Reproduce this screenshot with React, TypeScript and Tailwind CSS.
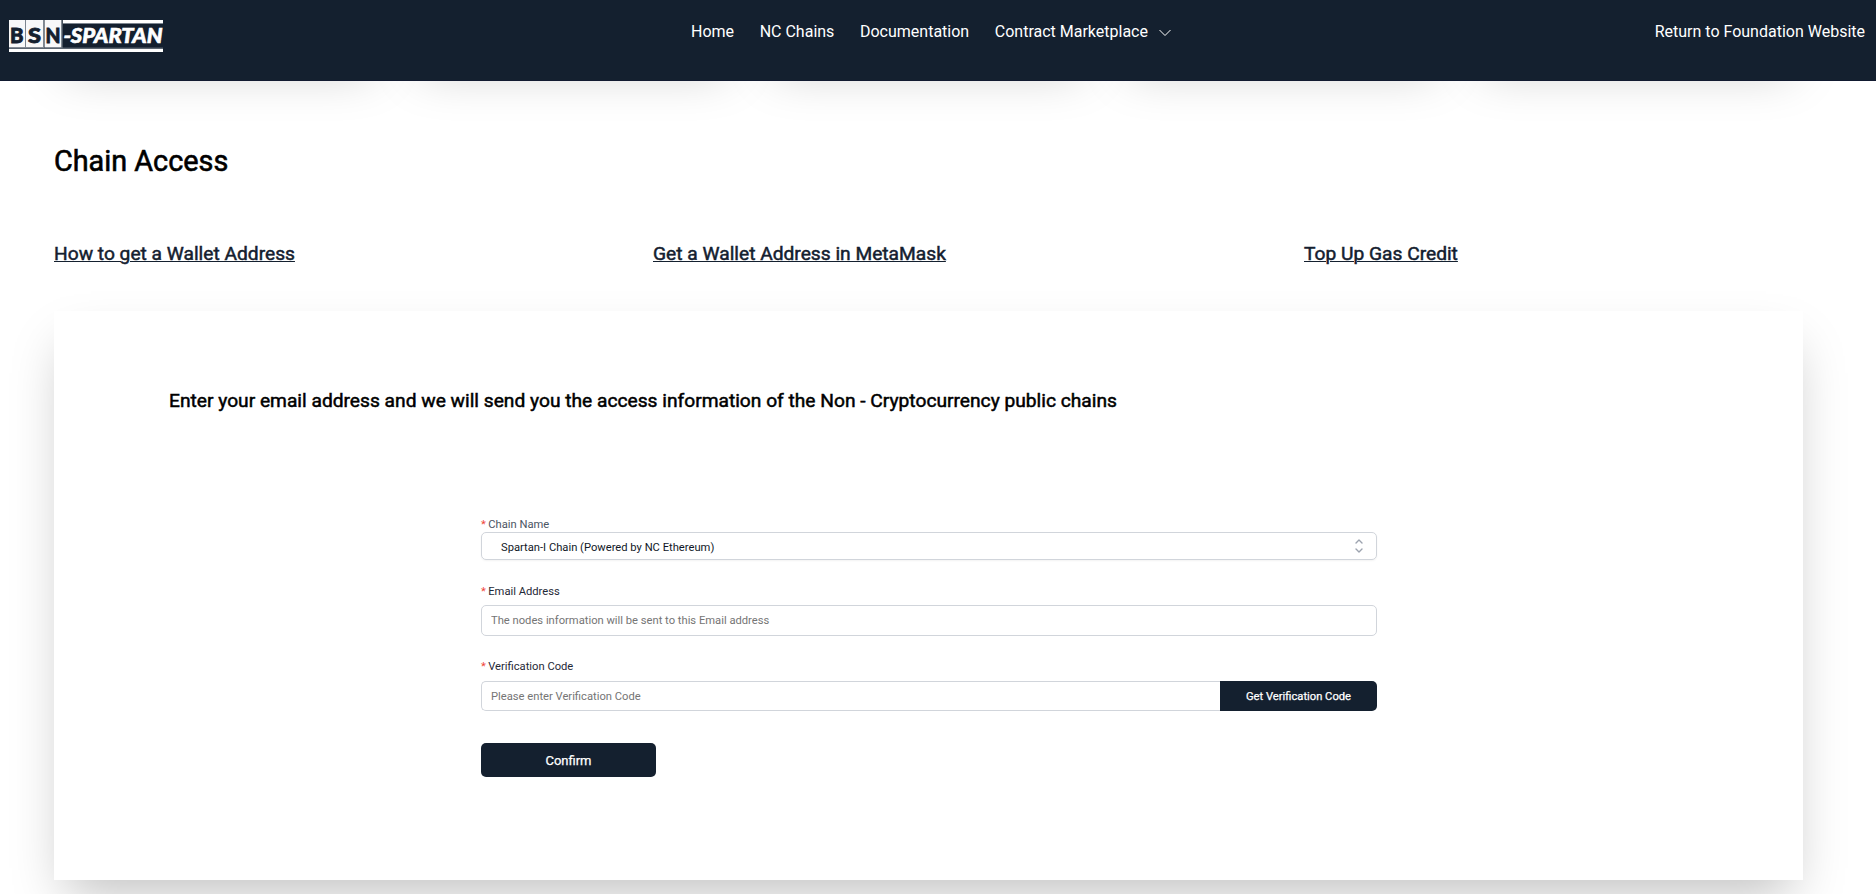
import React from "react";

const navItems = ["Home", "NC Chains", "Documentation"];
const guideLinks = ["How to get a Wallet Address", "Get a Wallet Address in MetaMask", "Top Up Gas Credit"];

function Logo() {
  return (
    <svg width="154" height="32" viewBox="0 0 154 32" fontFamily="Lato, sans-serif" fontWeight="900">
      <rect width="16" height="27.5" fill="#f8f8f9" />
      <rect x="17" width="17" height="27.5" fill="#f8f8f9" />
      <rect x="35.5" width="17" height="27.5" fill="#f8f8f9" />
      <path d="M16.5 0V28M34.5 0V28M53 0V28M54 3.5H154M0 28.2H154" stroke="#7d8690" />
      <rect x="54" width="100" height="3" fill="#fff" />
      <rect y="29" width="154" height="3" fill="#fff" />
      <g fill="#14202f" stroke="#14202f" strokeWidth="0.8" fontSize="20">
        <text x="1" y="22.5" textLength="13.5" lengthAdjust="spacingAndGlyphs">B</text>
        <text x="19" y="22.5" textLength="13" lengthAdjust="spacingAndGlyphs">S</text>
        <text x="36.5" y="22.5" textLength="15" lengthAdjust="spacingAndGlyphs">N</text>
      </g>
      <text x="54.5" y="22.5" fill="#fff" stroke="#fff" strokeWidth="0.6" fontSize="20" fontStyle="italic" textLength="99" lengthAdjust="spacingAndGlyphs">-SPARTAN</text>
    </svg>
  );
}

function Header() {
  return (
    <header className="relative flex h-[81px] items-start border-b border-[#111a30] bg-[#14202f] pr-[11px] pl-[9px] text-[16px] leading-6 text-white">
      <div className="mt-5 w-[682px]">
        <Logo />
      </div>
      <nav className="mt-5 flex flex-1 gap-[25.6px]">
        {navItems.map((item) => (
          <a key={item} href="#">{item}</a>
        ))}
        <a href="#" className="flex items-center">
          Contract Marketplace
          <svg className="mt-px ml-[11.5px]" width="12" height="8" viewBox="0 0 12 8" fill="none" stroke="white">
            <path d="M.5 1l5.5 5.500L11.500 1" />
          </svg>
        </a>
      </nav>
      <a href="#" className="mt-5">Return to Foundation Website</a>
    </header>
  );
}

function Label({ children, className }: { children: string; className: string }) {
  return (
    <label className={`flex gap-[2.4px] text-[11.2px] leading-4 ${className}`}>
      <span className="text-[#f04438]">*</span>
      {children}
    </label>
  );
}

export default function App() {
  return (
    <div className="h-[894px] overflow-hidden bg-white font-['Roboto',sans-serif] text-black">
      <div className="relative z-10">
        <Header />
      </div>
      <div className="-mt-[81px] grid h-14 grid-cols-5 gap-6 pr-[73px] pl-[54px]">
        {[0, 1, 2, 3, 4].map((n) => (
          <div key={n} className="bg-white shadow-2xl" />
        ))}
      </div>
      <main className="relative pt-[87px] pr-[73px] pl-[54px]">
        <h1 className="text-[28.8px] leading-9 font-normal [-webkit-text-stroke:0.6px_currentColor]">Chain Access</h1>
        <div className="mt-[61px] flex h-7 text-[19.2px] leading-7 font-normal text-[#14202f]">
          {guideLinks.map((link, i) => (
            <div key={link} className={i === 0 ? "w-[599px]" : i === 1 ? "w-[651px]" : ""}>
              <a href="#" className="whitespace-nowrap underline decoration-1 underline-offset-1 [-webkit-text-stroke:0.5px_currentColor]">{link}</a>
            </div>
          ))}
        </div>
        <section className="mt-[43px] h-[569px] bg-white pt-[76px] shadow-2xl">
          <h2 className="ml-[115px] text-[19.2px] leading-7 font-normal [-webkit-text-stroke:0.5px_currentColor]">
            Enter your email address and we will send you the access information of the Non - Cryptocurrency public chains
          </h2>
          <form className="mt-[102px] ml-[427px] w-[896px]">
            <Label className="text-[#4b5563]">Chain Name</Label>
            <button type="button" className="-mt-px flex h-7 w-full items-center justify-between rounded-[5px] border border-[#d1d5db] pr-[13px] pl-[19px] text-[11.2px] text-[#111827] shadow-xs">
              <span className="pt-[4px]">Spartan-I Chain (Powered by NC Ethereum)</span>
              <svg width="8" height="14" viewBox="0 0 8 14" fill="none" stroke="#9ca3af" strokeWidth="1.4" strokeLinecap="round" strokeLinejoin="round">
                <path d="M1 4l3-3 3 3M1 10l3 3 3-3" />
              </svg>
            </button>
            <Label className="mt-6 text-[#1f2937]">Email Address</Label>
            <input className="mt-[5px] block h-[31px] w-full rounded-[5px] border border-[#d1d5db] px-[9px] text-[11.2px] placeholder:text-[#757575]" placeholder="The nodes information will be sent to this Email address" />
            <Label className="mt-[23px] text-[#1f2937]">Verification Code</Label>
            <div className="mt-[6px] flex h-[30px]">
              <input className="block flex-1 rounded-l-[5px] border border-r-0 border-[#d1d5db] px-[9px] pt-[3px] text-[11.2px] placeholder:text-[#757575]" placeholder="Please enter Verification Code" />
              <button type="button" className="w-[157px] rounded-r-[5px] bg-[#14202f] pt-[3px] text-[11.2px] text-white [-webkit-text-stroke:0.25px_currentColor]">Get Verification Code</button>
            </div>
            <button type="button" className="mt-8 block h-[34px] w-[175px] rounded-[5px] bg-[#14202f] pt-px text-[13px] text-white [-webkit-text-stroke:0.25px_currentColor]">Confirm</button>
          </form>
        </section>
      </main>
    </div>
  );
}
